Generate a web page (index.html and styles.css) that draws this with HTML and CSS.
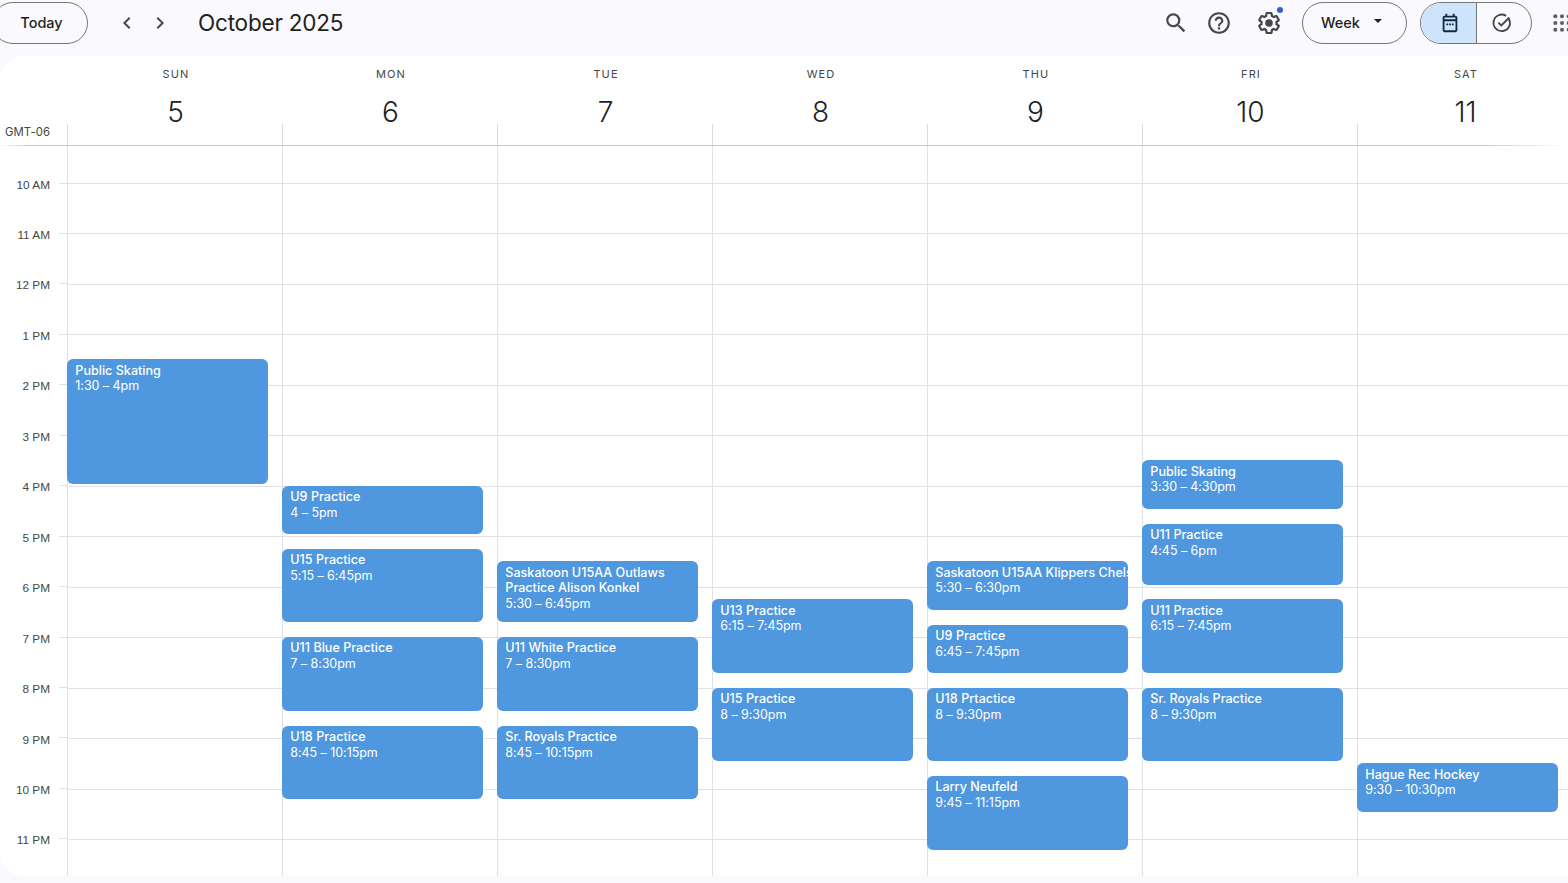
FILE: index.html
```html
<!DOCTYPE html>
<html lang="en">
<head>
<meta charset="utf-8">
<title>Calendar - Week of October 5, 2025</title>
<link rel="stylesheet" href="styles.css">
</head>
<body>
<header class="topbar">
  <div class="left">
    <button class="pill today">Today</button>
    <div class="nav">
      <svg class="chev" viewBox="0 0 24 24" width="24" height="24"><path d="M15.4 7.4 14 6l-6 6 6 6 1.4-1.4L10.8 12z"/></svg>
      <svg class="chev" viewBox="0 0 24 24" width="24" height="24"><path d="M8.6 7.4 10 6l6 6-6 6-1.4-1.4 4.6-4.6z"/></svg>
    </div>
    <h1 class="title">October 2025</h1>
  </div>
  <div class="right">
    <svg class="icon search" viewBox="0 0 24 24" width="26" height="26"><path d="M15.5 14h-.79l-.28-.27A6.47 6.47 0 0 0 16 9.5 6.5 6.5 0 1 0 9.5 16c1.61 0 3.09-.59 4.23-1.57l.27.28v.79l5 4.99L20.49 19l-4.99-5zm-6 0C7.01 14 5 11.99 5 9.500S7.01 5 9.500 5 14 7.010 14 9.500 11.990 14 9.500 14z"/></svg>
    <svg class="icon help" viewBox="0 0 24 24" width="26" height="26"><path d="M11 18h2v-2h-2v2zm1-16C6.480 2 2 6.480 2 12s4.480 10 10 10 10-4.480 10-10S17.520 2 12 2zm0 18c-4.410 0-8-3.590-8-8s3.590-8 8-8 8 3.590 8 8-3.590 8-8 8zm0-14c-2.210 0-4 1.790-4 4h2c0-1.100.9-2 2-2s2 .9 2 2c0 2-3 1.750-3 5h2c0-2.250 3-2.500 3-5 0-2.210-1.790-4-4-4z"/></svg>
    <span class="gear-wrap">
      <svg class="icon gear" viewBox="0 0 24 24" width="26" height="26"><path fill-rule="evenodd" d="M13.850 22.250h-3.700c-.74 0-1.360-.54-1.470-1.270l-.27-1.890c-.27-.14-.53-.29-.79-.46l-1.800.72c-.7.260-1.470-.03-1.810-.65L2.200 15.530c-.35-.66-.2-1.440.36-1.880l1.530-1.190c-.01-.15-.02-.3-.02-.46 0-.15.010-.31.020-.46l-1.520-1.190c-.59-.45-.74-1.260-.37-1.880l1.850-3.190c.34-.62 1.110-.9 1.790-.63l1.810.73c.26-.17.520-.32.780-.46l.27-1.910c.100-.7.720-1.260 1.460-1.260h3.700c.74 0 1.360.54 1.470 1.270l.27 1.890c.27.140.530.290.790.460l1.800-.72c.71-.26 1.480.03 1.820.65l1.840 3.180c.36.660.2 1.440-.36 1.880l-1.520 1.190c.01.150.02.300.02.460s-.01.310-.02.460l1.520 1.190c.56.450.72 1.230.37 1.860l-1.860 3.220c-.34.620-1.110.900-1.800.630l-1.800-.72c-.26.170-.520.320-.780.460l-.27 1.910c-.100.680-.72 1.220-1.460 1.220zm-3.230-2h2.760l.37-2.550.53-.22c.44-.18.88-.44 1.340-.78l.45-.34 2.380.96 1.380-2.400-2.030-1.580.07-.56c.03-.26.060-.530.060-.78s-.030-.530-.060-.78l-.07-.56 2.030-1.580-1.390-2.400-2.390.960-.45-.350c-.42-.320-.87-.580-1.330-.770l-.52-.220-.37-2.550h-2.760l-.37 2.550-.53.210c-.44.190-.88.440-1.340.790l-.45.330-2.380-.950-1.390 2.390 2.030 1.580-.07.56c-.03.260-.060.530-.060.790s.020.530.060.780l.07.560-2.030 1.580 1.380 2.400 2.390-.960.450.350c.430.330.860.580 1.330.770l.530.220.38 2.550zM12 15.500a3.500 3.500 0 1 1 0-7 3.500 3.500 0 0 1 0 7z"/></svg>
      <span class="dot"></span>
    </span>
    <button class="pill week"><span>Week</span><svg class="caret" viewBox="0 0 10 5" width="8" height="4"><path d="M0 0l5 5 5-5z"/></svg></button>
    <div class="toggle">
      <span class="seg on"><svg viewBox="0 0 24 24" width="22" height="22" class="cal"><path fill-rule="evenodd" d="M6 22a2 2 0 0 1-2-2V6a2 2 0 0 1 2-2h1V2h2v2h6V2h2v2h1a2 2 0 0 1 2 2v14a2 2 0 0 1-2 2H6zm0-2h12V10H6v10zM6 8h12V6H6v2z"/><path d="M8 12.500h2v2H8zM11 12.500h2v2h-2zM14 12.500h2v2h-2z"/></svg></span>
      <span class="seg off"><svg viewBox="0 0 24 24" width="22" height="22" class="chk"><path d="M19.500 7.300a9 9 0 1 1-3-3.100" fill="none" stroke-width="2"/><path d="M8 11.500l3.200 3.200L20 6" fill="none" stroke-width="2"/></svg></span>
    </div>
    <svg class="apps" viewBox="0 0 24 24" width="20" height="20"><circle cx="4" cy="4" r="2.400"/><circle cx="12" cy="4" r="2.400"/><circle cx="20" cy="4" r="2.400"/><circle cx="4" cy="12" r="2.400"/><circle cx="12" cy="12" r="2.400"/><circle cx="20" cy="12" r="2.400"/><circle cx="4" cy="20" r="2.400"/><circle cx="12" cy="20" r="2.400"/><circle cx="20" cy="20" r="2.400"/></svg>
  </div>
</header>

<main class="panel">
  <div class="heads">
    <div class="gmt">GMT-06</div>
    <div class="head"><span class="dow">SUN</span><span class="num">5</span></div>
    <div class="head"><span class="dow">MON</span><span class="num">6</span></div>
    <div class="head"><span class="dow">TUE</span><span class="num">7</span></div>
    <div class="head"><span class="dow">WED</span><span class="num">8</span></div>
    <div class="head"><span class="dow">THU</span><span class="num">9</span></div>
    <div class="head"><span class="dow">FRI</span><span class="num">10</span></div>
    <div class="head"><span class="dow">SAT</span><span class="num">11</span></div>
  </div>
  <div class="grid">
    <div class="times">
      <div class="t"><span>10 AM</span></div>
      <div class="t"><span>11 AM</span></div>
      <div class="t"><span>12 PM</span></div>
      <div class="t"><span>1 PM</span></div>
      <div class="t"><span>2 PM</span></div>
      <div class="t"><span>3 PM</span></div>
      <div class="t"><span>4 PM</span></div>
      <div class="t"><span>5 PM</span></div>
      <div class="t"><span>6 PM</span></div>
      <div class="t"><span>7 PM</span></div>
      <div class="t"><span>8 PM</span></div>
      <div class="t"><span>9 PM</span></div>
      <div class="t"><span>10 PM</span></div>
      <div class="t"><span>11 PM</span></div>
    </div>
    <div class="days">
      <div class="day">
        <div class="ev" style="top:213.4px;height:125px"><b>Public Skating</b><span>1:30 – 4pm</span></div>
      </div>
      <div class="day">
        <div class="ev" style="top:340px;height:48px"><b>U9 Practice</b><span>4 – 5pm</span></div>
        <div class="ev" style="top:403px;height:73px"><b>U15 Practice</b><span>5:15 – 6:45pm</span></div>
        <div class="ev" style="top:491px;height:74px"><b>U11 Blue Practice</b><span>7 – 8:30pm</span></div>
        <div class="ev" style="top:580px;height:73px"><b>U18 Practice</b><span>8:45 – 10:15pm</span></div>
      </div>
      <div class="day">
        <div class="ev" style="top:415.4px;height:61px"><b class="wrap">Saskatoon U15AA Outlaws Practice Alison Konkel</b><span>5:30 – 6:45pm</span></div>
        <div class="ev" style="top:491px;height:74px"><b>U11 White Practice</b><span>7 – 8:30pm</span></div>
        <div class="ev" style="top:580px;height:73px"><b>Sr. Royals Practice</b><span>8:45 – 10:15pm</span></div>
      </div>
      <div class="day">
        <div class="ev" style="top:453.4px;height:74px"><b>U13 Practice</b><span>6:15 – 7:45pm</span></div>
        <div class="ev" style="top:542px;height:73px"><b>U15 Practice</b><span>8 – 9:30pm</span></div>
      </div>
      <div class="day">
        <div class="ev" style="top:415.4px;height:49px"><b>Saskatoon U15AA Klippers Chelsea Gordon</b><span>5:30 – 6:30pm</span></div>
        <div class="ev" style="top:479px;height:48px"><b>U9 Practice</b><span>6:45 – 7:45pm</span></div>
        <div class="ev" style="top:542px;height:73px"><b>U18 Prtactice</b><span>8 – 9:30pm</span></div>
        <div class="ev" style="top:630px;height:74px"><b>Larry Neufeld</b><span>9:45 – 11:15pm</span></div>
      </div>
      <div class="day">
        <div class="ev" style="top:314.4px;height:49px"><b>Public Skating</b><span>3:30 – 4:30pm</span></div>
        <div class="ev" style="top:378px;height:61px"><b>U11 Practice</b><span>4:45 – 6pm</span></div>
        <div class="ev" style="top:453.4px;height:74px"><b>U11 Practice</b><span>6:15 – 7:45pm</span></div>
        <div class="ev" style="top:542px;height:73px"><b>Sr. Royals Practice</b><span>8 – 9:30pm</span></div>
      </div>
      <div class="day">
        <div class="ev" style="top:617.4px;height:49px"><b>Hague Rec Hockey</b><span>9:30 – 10:30pm</span></div>
      </div>
    </div>
  </div>
</main>
</body>
</html>
```
FILE: styles.css
```css
* { box-sizing: border-box; }
html, body { margin: 0; height: 883px; overflow: hidden; }
body { background: #faf9fd; font-family: Inter, "Noto Sans", sans-serif; color: #1f1f1f; }

.topbar { height: 56px; display: flex; justify-content: space-between; align-items: center; padding-bottom: 10px; overflow: hidden; }
.left, .right { display: flex; align-items: center; }
.pill { height: 42px; border: 1px solid #747775; border-radius: 21px; background: transparent; font: 500 14.5px Inter, sans-serif; color: #1f1f1f; padding: 0 0 2px; }
.today { width: 96px; margin-left: -8px; padding-left: 3px; }
.nav { display: flex; gap: 9px; margin-left: 27px; }
.chev { fill: #444746; }
.title { margin: 0 0 2px 26px; font: 400 22.500px Inter, sans-serif; color: #1f1f1f; letter-spacing: -.2px; }

.icon { fill: #444746; display: block; flex: none; }
.search { margin-right: 17px; }
.help { margin-right: 24px; }
.gear-wrap { position: relative; display: block; width: 26px; height: 26px; margin-right: 20px; }
.dot { position: absolute; top: -3px; right: -1px; width: 6px; height: 6px; border-radius: 50%; background: #2f5fd0; }
.week { width: 105px; display: flex; align-items: center; justify-content: center; gap: 14px; padding-right: 6px; }
.caret { fill: #1f1f1f; margin-bottom: 2px; }
.toggle { display: flex; width: 112px; height: 42px; margin-left: 13px; border: 1px solid #747775; border-radius: 21px; overflow: hidden; }
.seg { flex: 1; display: flex; align-items: center; justify-content: center; }
.seg.on { background: #cde4fa; border-right: 1px solid #747775; flex: 0 0 56px; padding-left: 3px; }
.seg.off { padding-right: 5px; }
.cal { fill: #0d2a44; }
.chk { stroke: #444746; fill: none; }
.apps { fill: #5c5f5e; margin-left: 20px; margin-right: -4px; flex: none; }

.panel { height: 820px; background: #fff; border-radius: 24px 0 0 24px; overflow: hidden; display: flex; flex-direction: column; }

.heads { height: 90px; display: grid; grid-template-columns: 67px repeat(7, 215px); position: relative; }
.heads::after { content: ""; position: absolute; left: 0; right: 0; bottom: 0; height: 1px; background: linear-gradient(to right, #fff 0, #c7c9ce 30px, #c7c9ce 1480px, #fff 100%); }
.gmt { font: 400 11.300px Inter, sans-serif; color: #444746; padding: 69px 0 0 5px; white-space: nowrap; letter-spacing: .1px; }
.head { position: relative; display: flex; flex-direction: column; align-items: center; padding-top: 12px; padding-left: 3px; }
.head::before { content: ""; position: absolute; left: 0; bottom: 0; height: 22px; border-left: 1px solid #dadce4; }
.dow { font: 400 11px Inter, sans-serif; letter-spacing: 1.1px; color: #444746; line-height: 13px; }
.num { font: 300 28px Inter, sans-serif; line-height: 34px; margin: 14px 0 0 -1px; color: #1f1f1f; }

.grid { flex: 1; display: grid; grid-template-columns: 67px 1505px; overflow: hidden; }
.times { padding-top: 36.500px; }
.t { height: 50.460px; border-top: 1px solid #e0e1e7; margin-left: 59px; position: relative; }
.t span { position: absolute; right: 17px; top: -5.950px; font: 400 11.800px "Liberation Sans", Arial, sans-serif; line-height: 14px; color: #444746; white-space: nowrap; }

.days { display: grid; grid-template-columns: repeat(7, 215px); background-image: repeating-linear-gradient(to bottom, #e0e1e7 0, #e0e1e7 1px, transparent 1px, transparent 50.460px); background-position: 0 36.500px; background-repeat: no-repeat; }
.day { position: relative; border-left: 1px solid #e0e1e7; }

.ev { position: absolute; left: -1px; width: 201px; padding: 3.150px 0 0 8.300px; background: #4f97de; border-radius: 6px; color: #fff; font: 400 12.500px/15.600px Inter, sans-serif; overflow: hidden; }
.ev b { display: block; font-weight: 500; font-size: 12.600px; white-space: nowrap; }
.ev b.wrap { white-space: normal; padding-right: 8px; }
.ev span { display: block; white-space: nowrap; letter-spacing: -.05px; }
```
